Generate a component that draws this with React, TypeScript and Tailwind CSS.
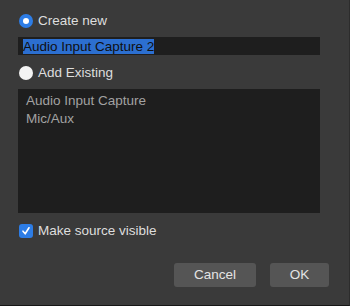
const App = () => {
  return (
    <div
      className="w-[350px] h-[306px] bg-[#3a3a3a] border-b border-r border-b-[#161616] border-r-[#2c2c2c] text-[13.5px] text-[#dedede] flex flex-col"
      style={{ fontFamily: '"Liberation Sans", Arial, sans-serif' }}
    >
      <div className="flex items-center h-[18px] mt-[12px] pl-[19px]">
        <span className="w-[14px] h-[14px] rounded-full bg-[#2d7de6] flex items-center justify-center">
          <span className="w-[6px] h-[6px] rounded-full bg-white" />
        </span>
        <span className="ml-[5px]">Create new</span>
      </div>

      <div className="mt-[7px] ml-[18px] w-[302px] h-[18px] bg-[#1e1e1e] flex items-center pl-[5px]">
        <span className="bg-[#2c6fd0] text-[#101010] leading-[15px] h-[15px]">Audio Input Capture 2</span>
      </div>

      <div className="flex items-center h-[18px] mt-[9px] pl-[19px]">
        <span className="w-[14px] h-[14px] rounded-full bg-[#f4f4f4]" />
        <span className="ml-[5px]">Add Existing</span>
      </div>

      <div className="mt-[7px] ml-[18px] w-[302px] h-[124px] bg-[#1e1e1e] pl-[8px] pt-[3px] text-[#a2a2a2] leading-[18px]">
        <p>Audio Input Capture</p>
        <p>Mic/Aux</p>
      </div>

      <div className="flex items-center h-[18px] mt-[9px] pl-[19px]">
        <span className="w-[14px] h-[14px] rounded-[3px] bg-[#2d7de6] flex items-center justify-center">
          <svg width="10" height="10" viewBox="0 0 10 10">
            <path d="M2 5.2 L4.2 7.8 L8 1.8" fill="none" stroke="white" strokeWidth="1.6" strokeLinecap="round" strokeLinejoin="round" />
          </svg>
        </span>
        <span className="ml-[5px]">Make source visible</span>
      </div>

      <div className="flex justify-end gap-[14px] mt-[23px] pr-[20px]">
        <button className="w-[82px] h-[24px] rounded-[3px] bg-[#555555] text-[#e4e4e4]">Cancel</button>
        <button className="w-[59px] h-[24px] rounded-[3px] bg-[#555555] text-[#e4e4e4]">OK</button>
      </div>
    </div>
  );
};

export default App;
